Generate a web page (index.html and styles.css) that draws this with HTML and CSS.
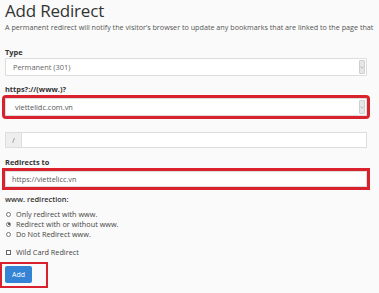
FILE: index.html
```html
<!DOCTYPE html>
<html>
<head>
<meta charset="utf-8">
<link rel="stylesheet" href="styles.css">
</head>
<body>
<div class="page">
  <h1 class="title">Add Redirect</h1>
  <p class="desc">A permanent redirect will notify the visitor’s browser to update any bookmarks that are linked to the page that</p>

  <div class="label lbl-type">Type</div>
  <div class="select">
    <span class="select-text">Permanent (301)</span>
    <span class="arrow"><svg width="4" height="3" viewBox="0 0 4 3"><path d="M0.5 0.8 L2 2.2 L3.5 0.8" fill="none" stroke="#999" stroke-width="0.6"/></svg></span>
  </div>

  <div class="label lbl-https">https?://(www.)?</div>
  <div class="select hl">
    <span class="select-text dark">viettelidc.com.vn</span>
    <span class="arrow"><svg width="4" height="3" viewBox="0 0 4 3"><path d="M0.5 0.8 L2 2.2 L3.5 0.8" fill="none" stroke="#999" stroke-width="0.6"/></svg></span>
  </div>

  <div class="group">
    <span class="addon">/</span>
    <span class="group-input"></span>
  </div>

  <div class="label lbl-to">Redirects to</div>
  <div class="input hl">https://viettelicc.vn</div>

  <div class="label lbl-www">www. redirection:</div>
  <div class="options">
    <div class="opt"><span class="radio"></span>Only redirect with www.</div>
    <div class="opt"><span class="radio on"></span>Redirect with or without www.</div>
    <div class="opt"><span class="radio"></span>Do Not Redirect www.</div>
  </div>

  <div class="opt check-row"><span class="check"></span>Wild Card Redirect</div>

  <div class="btn-wrap"><button class="btn">Add</button></div>
</div>
</body>
</html>
```

FILE: styles.css
```css
html, body {
  margin: 0;
  padding: 0;
  background: #fafafa;
}
body {
  font-family: "Open Sans", "Liberation Sans", sans-serif;
  color: #333;
  overflow: hidden;
}
.page {
  padding: 0 12px 0 5px;
  width: 362px;
}
.title {
  margin: 0;
  font-size: 17px;
  line-height: 22px;
  font-weight: 400;
  letter-spacing: -0.2px;
  color: #333;
}
.desc {
  margin: 0;
  font-size: 7.2px;
  line-height: 10px;
  color: #555;
  white-space: nowrap;
}
.label {
  font-size: 7.4px;
  line-height: 10px;
  font-weight: 700;
  color: #333;
}
.lbl-type { margin-top: 15px; }
.lbl-https { margin-top: 8px; }
.lbl-to { margin-top: 9px; }
.lbl-www { margin-top: 7px; font-weight: 600; }

.select {
  margin-top: 1px;
  height: 18px;
  box-sizing: border-box;
  border: 1px solid #ddd;
  background: #fff;
  display: flex;
  align-items: center;
  justify-content: space-between;
  padding: 0 1px 0 7px;
  border-radius: 1px;
}
.select.hl { margin-top: 4px; padding-left: 9px; }
.select-text {
  font-size: 7.4px;
  color: #666;
}
.select-text.dark { color: #555; }
.arrow {
  width: 6px;
  height: 14px;
  background: #e6e6e6;
  border: 1px solid #cfcfcf;
  box-sizing: border-box;
  border-radius: 1px;
  display: flex;
  align-items: center;
  justify-content: center;
}
.hl {
  outline: 3px solid #d9222e;
}
.group {
  margin-top: 16px;
  height: 16px;
  display: flex;
  box-sizing: border-box;
  border: 1px solid #ddd;
  background: #fff;
}
.addon {
  width: 15px;
  background: #eee;
  border-right: 1px solid #ddd;
  font-size: 6.8px;
  color: #666;
  display: flex;
  align-items: center;
  justify-content: center;
}
.group-input { flex: 1; }
.input {
  margin-top: 4px;
  height: 16px;
  box-sizing: border-box;
  border: 1px solid #ddd;
  background: #fff;
  font-size: 7.3px;
  color: #555;
  padding-left: 6px;
  display: flex;
  align-items: center;
}
.options { margin-top: 5px; }
.opt {
  height: 10px;
  display: flex;
  align-items: center;
  font-size: 7.3px;
  color: #444;
}
.radio {
  width: 5px;
  height: 5px;
  border: 0.8px solid #777;
  border-radius: 50%;
  box-sizing: border-box;
  margin: 0 5px 0 1px;
  background: #fff;
  position: relative;
}
.radio.on::after {
  content: "";
  position: absolute;
  left: 0.8px;
  top: 0.8px;
  width: 2px;
  height: 2px;
  border-radius: 50%;
  background: #333;
}
.check-row { margin-top: 8px; }
.check {
  width: 5px;
  height: 5px;
  border: 0.8px solid #666;
  box-sizing: border-box;
  margin: 0 5px 0 1px;
  background: #fff;
}
.btn-wrap {
  margin: 5px 0 0 -5px;
  width: 48px;
  height: 26px;
  box-sizing: border-box;
  border: 2px solid #d9222e;
  padding: 2px 0 0 3px;
}
.btn {
  display: block;
  width: 27px;
  height: 17px;
  border: 0;
  border-radius: 2px;
  background: #3583d4;
  color: #fff;
  font-family: "Open Sans", "Liberation Sans", sans-serif;
  font-size: 7px;
  padding: 0;
}
```
